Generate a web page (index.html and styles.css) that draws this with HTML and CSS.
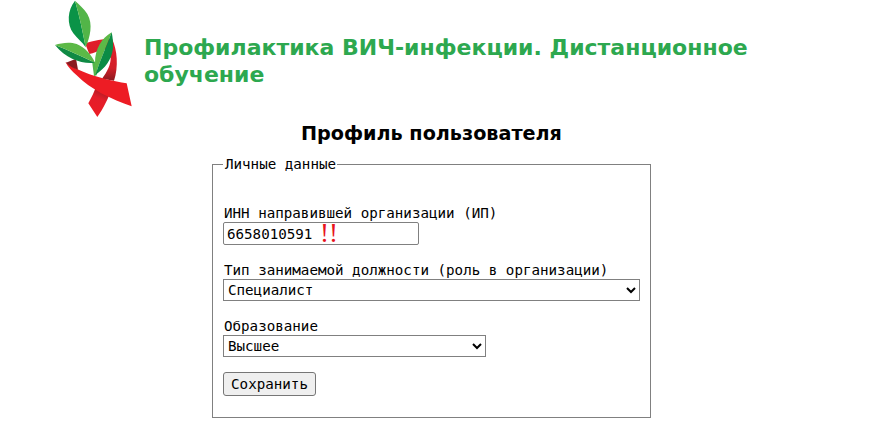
FILE: index.html
```html
<!DOCTYPE html>
<html lang="ru">
<head>
    <meta charset="UTF-8">
    <meta name="viewport" content="width=device-width, initial-scale=1.0">
    <title>Профиль пользователя</title>
    <link rel="stylesheet" href="styles.css">
</head>
<body>
    <header class="site-header">
        <svg class="logo" viewBox="0 0 330 375" width="110" height="125" aria-hidden="true">
            <defs>
                <linearGradient id="loop-shade" x1="0" y1="0" x2="0" y2="1">
                    <stop offset="0" stop-color="#e31e2a"/>
                    <stop offset="0.7" stop-color="#d21f28"/>
                    <stop offset="1" stop-color="#8a1a20"/>
                </linearGradient>
                <linearGradient id="tail-shade" x1="0.7" y1="0" x2="0.4" y2="1">
                    <stop offset="0" stop-color="#8a1a20"/>
                    <stop offset="0.45" stop-color="#e31e2a"/>
                    <stop offset="1" stop-color="#ed1c24"/>
                </linearGradient>
            </defs>
            <!-- лента -->
            <path fill="url(#loop-shade)" d="M135 130 C160 122 190 116 216 116 C232 150 236 200 222 242 L186 236 C202 215 212 195 212 175 C206 165 198 152 190 145 C175 155 160 160 148 162 Z"/>
            <path fill="url(#tail-shade)" d="M170 255 L212 272 C205 295 190 325 172 351 L145 310 C155 292 163 275 170 255 Z"/>
            <path fill="#ed1c24" d="M76 185 C110 214 180 236 260 250 L275 319 C215 298 150 268 110 226 C98 214 84 202 76 185 Z"/>
            <path fill="#8a1a20" d="M78 188 L108 176 L114 209 C100 204 88 198 78 188 Z"/>
            <!-- листья -->
            <path fill="#0a9347" d="M105 2 C82 30 80 72 100 100 C112 116 128 128 137 142 C128 95 118 45 105 2 Z"/>
            <path fill="#52b548" d="M105 2 C118 45 128 95 137 142 C150 112 160 72 142 42 C132 26 118 14 105 2 Z"/>
            <path fill="#52b548" d="M156 182 L172 190 L170 226 L162 228 Z"/>
            <path fill="#0f8a44" d="M45 135 C80 178 125 192 165 188 C125 170 85 150 45 135 Z"/>
            <path fill="#5cb947" d="M45 135 C85 150 125 170 165 188 C155 165 135 142 110 132 C90 125 65 128 45 135 Z"/>
            <path fill="#5cb947" d="M215 97 C185 115 165 145 165 190 L166 225 C180 180 200 140 215 97 Z"/>
            <path fill="#0a8c45" d="M215 97 C200 140 180 180 166 225 C195 205 215 180 219 145 C220 128 218 112 215 97 Z"/>
        </svg>
        <h1 class="site-title">Профилактика ВИЧ-инфекции. Дистанционное обучение</h1>
    </header>

    <main class="content">
        <h2 class="page-title">Профиль пользователя</h2>
        <form class="profile-form">
            <fieldset>
                <legend>Личные данные</legend>

                <div class="field">
                    <label for="inn">ИНН направившей организации (ИП)</label>
                    <div class="inn-wrap">
                        <input type="text" id="inn" value="6658010591">
                        <span class="warn">!!</span>
                    </div>
                </div>

                <div class="field">
                    <label for="role">Тип занимаемой должности (роль в организации)</label>
                    <select id="role" class="select-wide">
                        <option>Специалист</option>
                    </select>
                </div>

                <div class="field">
                    <label for="education">Образование</label>
                    <select id="education" class="select-short">
                        <option>Высшее</option>
                    </select>
                </div>

                <button type="submit">Сохранить</button>
            </fieldset>
        </form>
    </main>
</body>
</html>
```

FILE: styles.css
```css
body {
    font-family: "DejaVu Sans Mono", monospace;
    font-size: 14.2px;
    color: #000;
    background-color: #fff;
    margin: 0;
    padding: 0 12px 0 0;
    height: 440px;
    box-sizing: border-box;
    overflow: hidden;
}

/* Шапка */
.site-header {
    display: flex;
    align-items: flex-start;
    padding-left: 40px;
    height: 123px;
}

.logo {
    flex: none;
}

.site-title {
    margin: 34px 0 0 -6px;
    width: 680px;
    font-family: "DejaVu Sans", sans-serif;
    font-size: 22px;
    line-height: 27px;
    font-weight: bold;
    color: #2da84f;
}

/* Основная часть */
.page-title {
    margin: 0;
    text-align: center;
    font-family: "DejaVu Sans", sans-serif;
    font-size: 19.2px;
    line-height: 22px;
    font-weight: bold;
}

.profile-form {
    width: 439px;
    margin: 11px auto 0;
}

fieldset {
    margin: 0;
    padding: 33px 10px 21px 10px;
    border: 1px solid #808080;
}

legend {
    padding: 0 1px 0 2px;
}

.field {
    margin-bottom: 17px;
}

.field:nth-child(4) {
    margin-bottom: 15px;
}

label {
    display: block;
    line-height: 17px;
    padding-left: 1px;
}

.inn-wrap {
    position: relative;
    width: 196px;
}

input {
    display: block;
    width: 196px;
    height: 23px;
    box-sizing: border-box;
    padding: 1px 3px;
    border: 1px solid #808080;
    border-radius: 2px;
    font-family: inherit;
    font-size: 14.2px;
}

.warn {
    position: absolute;
    left: 97px;
    top: 1px;
    color: #e8141c;
    font-family: "Liberation Serif", serif;
    font-size: 27px;
    line-height: 20px;
}

select {
    display: block;
    height: 22px;
    box-sizing: border-box;
    border: 1px solid #808080;
    border-radius: 0;
    background-color: #fff;
    font-family: "DejaVu Sans Mono", monospace;
    font-size: 14.2px;
}

.select-wide {
    width: 417px;
}

.select-short {
    width: 263px;
}

button {
    display: block;
    width: 93px;
    height: 24px;
    padding: 0;
    background-color: #efefef;
    border: 1px solid #767676;
    border-radius: 3px;
    font-family: inherit;
    font-size: 14.2px;
    cursor: pointer;
}
```
